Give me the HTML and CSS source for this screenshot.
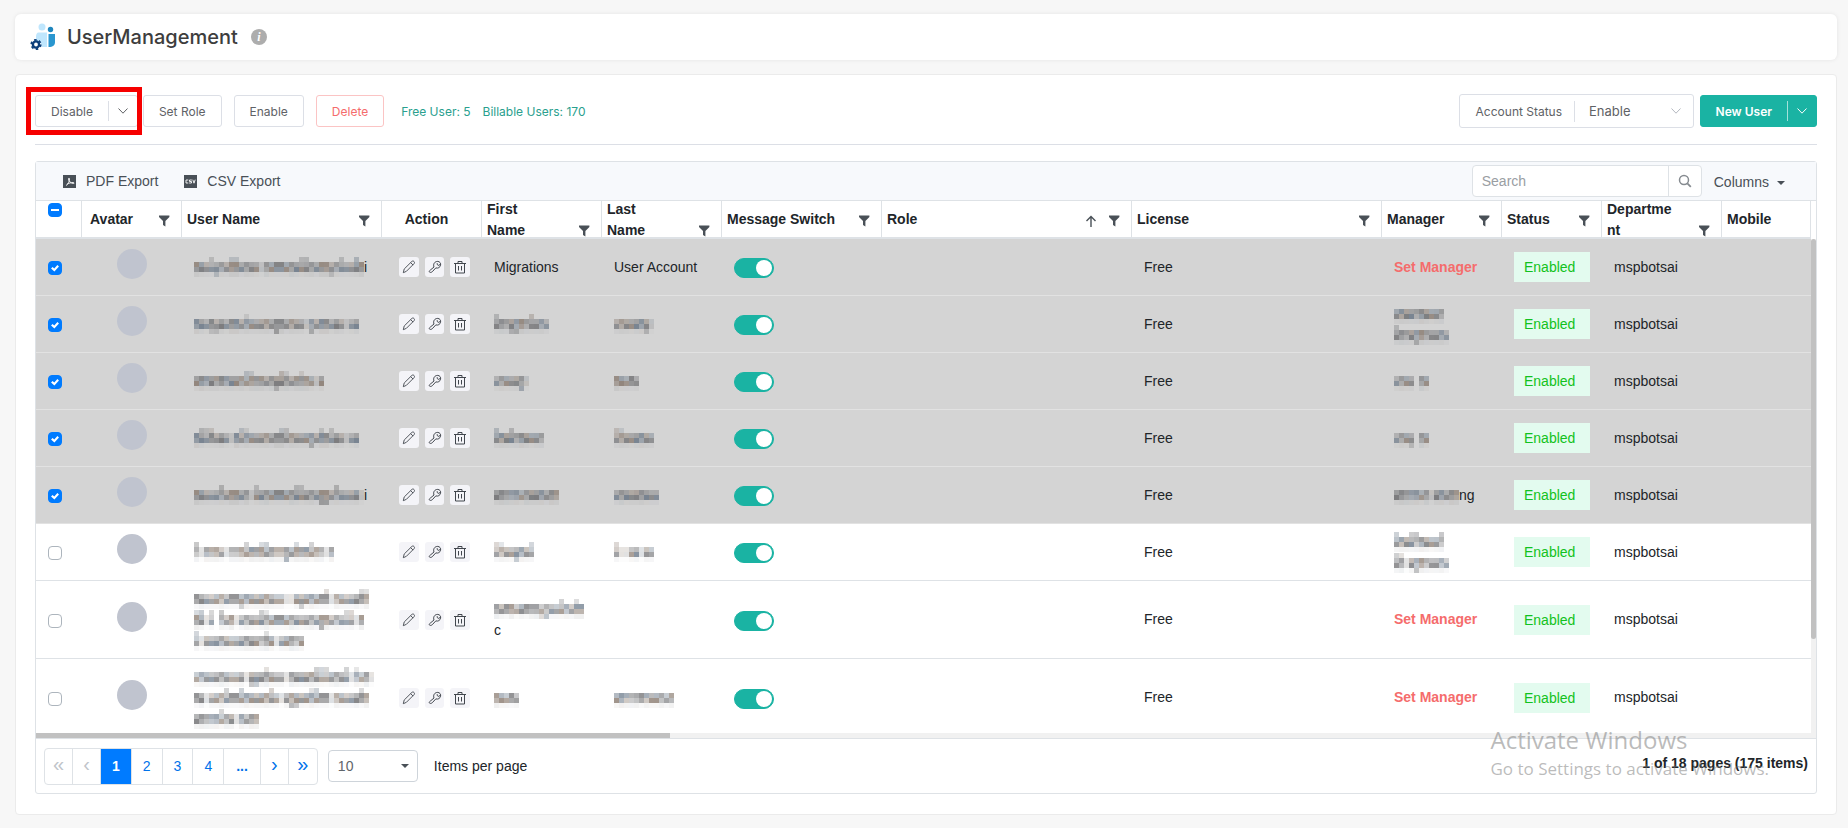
FILE: index.html
```html
<!DOCTYPE html>
<html lang="en">
<head>
    <meta charset="utf-8">
    <title>UserManagement</title>
    <meta name="viewport" content="width=device-width, initial-scale=1">
    <link rel="stylesheet" href="styles.css">
</head>

<body>
    <!-- shared icons -->
    <svg class="sprite" aria-hidden="true">
        <symbol id="i-filter" viewBox="0 0 12 12"><path d="M1 0.5h10.4v1.4L7.4 6v5.6L5 10V6L1 1.9z" fill="currentColor"/></symbol>
        <symbol id="i-down" viewBox="0 0 12 12"><path d="M1.5 3.5L6 8.2l4.500-4.700" fill="none" stroke="currentColor"/></symbol>
        <symbol id="i-pencil" viewBox="0 0 14 14"><path d="M1.300 12.700l.9-3.700 7.700-7.600c.7-.6 1.500-.5 2.100.1s.7 1.400.1 2.100l-7.700 7.700zM8.700 2.700l2.400 2.400" fill="none" stroke="currentColor" stroke-width=".9"/></symbol>
        <symbol id="i-key" viewBox="0 0 14 14"><path d="M6 7C4.800 4 6.800 1.300 9.800 1.400c2 .2 3.200 1.800 2.800 3.800-.5 2.200-2.600 3.400-4.800 2.700l-3.500 3.800c-1.100 1-2.800.9-3 .1-.2-.9.700-1.600 1.600-2.200zM9.200 3.200c-.3 1.300.4 2.200 1.700 2.200l1.400-1.300" fill="none" stroke="currentColor"/></symbol>
        <symbol id="i-trash" viewBox="0 0 14 14"><path d="M1 3.500h12M5 3.500v-2h4v2M2.500 3.500v9.500h9v-9.500M5.500 6v4.500M8.500 6v4.500" fill="none" stroke="currentColor"/></symbol>
    </svg>

    <header class="page-head">
        <svg class="logo" viewBox="0 0 26 30">
            <circle cx="12" cy="5" r="3.500" fill="#bfe6fd"/>
            <path d="M8.500 10.500H17V25h-5.500c0-4-2-6-5.500-6v-4c0-3 1-4.500 2.500-4.500z" fill="#bfe6fd"/>
            <circle cx="20.500" cy="7.500" r="2.700" fill="#1f86bd"/>
            <path d="M18.500 12h6.500v8c0 3.500-2 5-6.500 5z" fill="#2a96cf"/>
            <circle cx="6" cy="22.500" r="3.100" fill="#fff" stroke="#0d3f7a" stroke-width="2.400"/>
            <circle cx="6" cy="22.500" r="4.700" fill="none" stroke="#0d3f7a" stroke-width="1.800" stroke-dasharray="2.500 2.420"/>
        </svg>
        <h1>UserManagement</h1>
        <span class="info">i</span>
    </header>

    <main class="card">
        <div class="actions">
            <div class="split split-marked">
                <button type="button">Disable</button>
                <button type="button" class="arrow" aria-label="More disable options"><svg><use href="#i-down"/></svg></button>
            </div>
            <button type="button" class="btn">Set Role</button>
            <button type="button" class="btn">Enable</button>
            <button type="button" class="btn btn-danger">Delete</button>
            <span class="count">Free User: 5</span>
            <span class="count">Billable Users: 170</span>

            <div class="status-filter">
                <label for="status">Account Status</label>
                <select id="status"><option>Enable</option><option>Disable</option></select>
                <svg><use href="#i-down"/></svg>
            </div>
            <div class="split split-primary">
                <button type="button">New User</button>
                <button type="button" class="arrow" aria-label="More user options"><svg><use href="#i-down"/></svg></button>
            </div>
        </div>

        <section class="grid">
            <div class="grid-tools">
                <button type="button" class="tool">
                    <svg viewBox="0 0 13 13"><path d="M0 0h13v13H0z" fill="#495057"/><path d="M3 10.500c2-1 3.500-4 3.500-6.500 0-1.200-1-1.200-1 0 0 2 2.500 4.500 5 4.500 1 0 .8-1-.5-1-2 0-4.500.8-6 1.800" fill="none" stroke="#fff" stroke-width=".9"/></svg>
                    PDF Export
                </button>
                <button type="button" class="tool">
                    <svg viewBox="0 0 13 13"><path d="M0 0h13v13H0z" fill="#495057"/><path d="M4.300 5H2v3h2.300M7.800 5H5.500v1.500h2V8H5.200M8.800 4.700L10 8.200l1.200-3.500" fill="none" stroke="#fff" stroke-width=".9"/></svg>
                    CSV Export
                </button>
                <div class="search">
                    <input type="text" placeholder="Search" aria-label="Search">
                    <button type="button" aria-label="Run search"><svg viewBox="0 0 14 14"><circle cx="6" cy="6" r="4.500" fill="none" stroke="currentColor" stroke-width="1.500"/><path d="M9.300 9.300l3.500 3.500" stroke="currentColor" stroke-width="1.800"/></svg></button>
                </div>
                <button type="button" class="columns">Columns <i class="caret"></i></button>
            </div>

            <div class="grid-body">
                <div class="grid-view">
                    <table>
                        <colgroup>
                            <col class="w-check"><col class="w-s"><col class="w-name"><col class="w-s"><col class="w-m"><col class="w-m"><col class="w-switch">
                            <col class="w-l"><col class="w-l"><col class="w-m"><col class="w-s"><col class="w-m"><col>
                        </colgroup>
                        <thead><tr id="head"></tr></thead>
                        <tbody id="rows"></tbody>
                    </table>
                </div>
                <div class="vbar"><i></i></div>
            </div>
            <div class="hbar"><i></i></div>

            <footer class="pager">
                <nav class="pages">
                    <button type="button" class="sign" disabled>«</button>
                    <button type="button" class="sign" disabled>‹</button>
                    <button type="button" class="current">1</button>
                    <button type="button">2</button>
                    <button type="button">3</button>
                    <button type="button">4</button>
                    <button type="button" class="dots">...</button>
                    <button type="button" class="sign">›</button>
                    <button type="button" class="sign">»</button>
                </nav>
                <div class="size">
                    <select id="size"><option>10</option><option>25</option><option>50</option></select>
                    <i class="caret"></i>
                </div>
                <label for="size">Items per page</label>
                <strong>1 of 18 pages (175 items)</strong>
            </footer>
        </section>
    </main>

    <div class="activate">
        <p>Activate Windows</p>
        <small>Go to Settings to activate Windows.</small>
    </div>

    <script src="script.js"></script>
</body>
</html>
```

FILE: styles.css
```css
* {
    box-sizing: border-box;
}

body {
    margin: 0;
    padding: 14px 11px 14px 15px;
    background: #f7f7f7;
    color: #212529;
    font-family: "Liberation Sans", Arial, sans-serif;
    font-size: 14px;
    line-height: 21px;
}

button, input, select {
    font: inherit;
    color: inherit;
    margin: 0;
    padding: 0;
    border: none;
    background: none;
}

button {
    cursor: pointer;
}

select {
    appearance: none;
}

svg {
    display: block;
    width: 12px;
    height: 12px;
}

.sprite {
    position: absolute;
    width: 0;
    height: 0;
}

/* Page header */
.page-head {
    display: flex;
    align-items: center;
    height: 46px;
    padding: 0 15px;
    background: #fff;
    border-radius: 6px;
    box-shadow: 0 0 4px rgba(0, 0, 0, 0.08);
    font-family: Inter, sans-serif;
}

.logo {
    width: 26px;
    height: 30px;
}

.page-head h1 {
    margin: 0 13px 0 11px;
    color: #3d3d3d;
    font-size: 20px;
    font-weight: 500;
}

.info {
    width: 16px;
    height: 16px;
    border-radius: 50%;
    background: #adadad;
    color: #fff;
    font: italic bold 12px/16px "Liberation Serif", serif;
    text-align: center;
}

/* Card and its action bar */
.card {
    margin-top: 14px;
    padding: 19px 19px 20px;
    background: #fff;
    border: 1px solid #ebebeb;
    border-radius: 4px;
}

.actions {
    display: flex;
    align-items: center;
    height: 51px;
    padding-bottom: 16px;
    border-bottom: 1px solid #dcdfe6;
    color: #606266;
    font-family: Inter, sans-serif;
    font-size: 12px;
}

.btn, .split {
    height: 32px;
    border: 1px solid #dcdfe6;
    border-radius: 3px;
    background: #fff;
}

.btn {
    margin-right: 12px;
    padding: 0 15px;
}

.btn-danger {
    margin-right: 17px;
    border-color: #fbc4c4;
    color: #f56c6c;
}

.split {
    display: flex;
    align-items: center;
}

.split button {
    padding: 0 15px;
}

.split .arrow {
    height: 20px;
    padding: 0 8px;
    border-left: 1px solid #dcdfe6;
}

.split-marked {
    position: relative;
    margin-right: 5px;
}

/* Red frame round the Disable button */
.split-marked::after {
    content: '';
    position: absolute;
    inset: -9px -5px -9px -10px;
    border: 5px solid #f60000;
    pointer-events: none;
}

.split-primary {
    border-color: #1ab3a3;
    background: #1ab3a3;
    color: #fff;
    font-weight: 600;
}

.split-primary .arrow {
    border-color: #a3e1da;
}

.count {
    margin-right: 12px;
    color: #2aa08e;
}

.status-filter {
    display: flex;
    align-items: center;
    width: 235px;
    height: 34px;
    margin-left: auto;
    margin-right: 6px;
    padding: 0 11px 0 16px;
    border: 1px solid #dcdfe6;
    border-radius: 3px;
}

.status-filter label {
    padding-right: 12px;
    border-right: 1px solid #dcdfe6;
}

.status-filter select {
    flex: 1;
    padding-left: 14px;
    font-size: 13px;
}

.status-filter svg {
    color: #b4b8c0;
}

/* Grid */
.grid {
    margin-top: 16px;
    border: 1px solid #dee2e6;
    border-radius: 3px;
}

.grid-tools {
    display: flex;
    align-items: center;
    height: 39px;
    padding: 0 31px 0 27px;
    border-bottom: 1px solid #dee2e6;
    background: #f7f9fc;
    color: #495057;
}

.tool {
    display: flex;
    align-items: center;
    gap: 10px;
    margin-right: 26px;
}

.tool svg {
    width: 13px;
    height: 13px;
}

.search {
    display: flex;
    width: 230px;
    height: 32px;
    margin-left: auto;
    margin-right: 12px;
    border: 1px solid #dee2e6;
    border-radius: 4px;
    background: #fff;
}

.search input {
    flex: 1;
    min-width: 0;
    padding: 0 9px;
}

.search input::placeholder {
    color: #9a9ea3;
}

.search button {
    padding: 0 9px;
    border-left: 1px solid #dee2e6;
    color: #868b90;
}

.search svg {
    width: 14px;
    height: 14px;
}

.columns {
    display: flex;
    align-items: center;
    gap: 8px;
    padding-top: 3px;
}

.caret {
    border: 4px solid transparent;
    border-top-color: #495057;
    border-bottom: 0;
}

.grid-body {
    display: flex;
}

.grid-view {
    flex: 1;
    min-width: 0;
    height: 532px;
    overflow: hidden;
}

table {
    width: 100%;
    table-layout: fixed;
    border-spacing: 0;
}

.w-check { width: 46px; }
.w-s { width: 100px; }
.w-m { width: 120px; }
.w-name { width: 200px; }
.w-switch { width: 160px; }
.w-l { width: 250px; }

th {
    padding: 0;
    border-right: 1px solid #dee2e6;
    border-bottom: 2px solid #dee2e6;
    font-weight: bold;
    text-align: left;
}

.th {
    display: flex;
    align-items: center;
    gap: 11px;
    height: 36px;
    padding: 0 11px 0 5px;
    overflow: hidden;
}

.th span {
    flex: 1;
    min-width: 0;
    overflow-wrap: anywhere;
}

.th svg {
    flex: none;
    margin-top: 3px;
    color: #495057;
}

/* Long names break in two lines, the icon follows the last one */
.th-two {
    align-items: flex-end;
}

.th-two span {
    margin-bottom: -4px;
    padding-right: 12px;
}

.th-avatar {
    padding-left: 8px;
}

.th-center {
    justify-content: center;
    padding-right: 15px;
}

.th-center span {
    flex: none;
}

.th-check {
    align-items: flex-start;
    padding: 2px 0 0 12px;
}

td {
    height: 57px;
    padding: 0 12px;
    border-bottom: 1px solid #dee2e6;
    vertical-align: middle;
}

.tall td {
    height: 78px;
}

.selected td {
    background: #d4d4d4;
    border-color: #e2e2e2;
}

input[type="checkbox"] {
    display: block;
    appearance: none;
    width: 14px;
    height: 14px;
    border: 1px solid #adb5bd;
    border-radius: 4px;
    background: #fff;
}

td input[type="checkbox"] {
    margin-top: 2px;
}

input[type="checkbox"]:checked, .partial:not(:checked) {
    border-color: #007bff;
    background: #007bff;
}

input[type="checkbox"]:checked::before {
    content: '';
    display: block;
    width: 12px;
    height: 12px;
    background: #fff;
    clip-path: polygon(17% 54%, 30% 42%, 44% 54%, 70% 25%, 83% 37%, 45% 80%);
}

.partial::before {
    content: '';
    display: block;
    width: 8px;
    height: 2px;
    margin: 5px 2px;
    background: #fff;
}

.avatar {
    width: 30px;
    height: 30px;
    margin: 0 auto 6px;
    border-radius: 50%;
    background: #c0c4cf;
}

.row-tools {
    display: flex;
    gap: 6px;
    margin-left: 5px;
}

.row-tools button {
    display: grid;
    place-items: center;
    width: 20px;
    height: 20px;
    border-radius: 3px;
    background: #f4f4f8;
    color: #41464d;
}

.row-tools svg {
    width: 14px;
    height: 14px;
}

input.switch {
    width: 40px;
    height: 20px;
    border-radius: 10px;
}

input.switch:checked {
    border-color: #1ab3a3;
    background: #1ab3a3;
}

input.switch:checked::before {
    width: 16px;
    height: 16px;
    margin: 1px 1px 1px auto;
    border-radius: 50%;
    clip-path: none;
}

.set-manager {
    color: #f56c6c;
    font-weight: bold;
    text-decoration: none;
}

.badge {
    display: block;
    width: 76px;
    padding: 5px 10px 4px;
    background: #e3fbef;
    color: #12c220;
}

.line {
    display: flex;
    align-items: center;
    height: 21px;
}

.mask {
    flex: none;
    height: 20px;
}

/* Scroll bars */
.vbar {
    width: 5px;
    margin-top: 38px;
    background: #f1f1f1;
}

.vbar i {
    display: block;
    height: 400px;
    border-radius: 3px;
    background: #c1c1c1;
}

.hbar {
    height: 5px;
    background: #f1f1f1;
}

.hbar i {
    display: block;
    width: 35.6%;
    height: 5px;
    background: #c1c1c1;
}

/* Pager */
.pager {
    display: flex;
    align-items: center;
    height: 55px;
    padding: 0 8px;
    border-top: 1px solid #dee2e6;
}

.pages {
    display: flex;
    height: 37px;
    margin-right: 10px;
    border: 1px solid #dee2e6;
    border-radius: 4px;
    overflow: hidden;
    color: #0072ea;
}

.pages button {
    padding: 0 11px;
    border-right: 1px solid #dee2e6;
}

.pages button:last-child {
    border-right: none;
}

.pages .sign {
    width: 28px;
    padding: 0 0 4px;
    font-size: 20px;
}

.pages .sign:disabled {
    color: #c0c4ca;
}

.pages .current {
    background: #007bff;
    color: #fff;
    font-weight: bold;
}

.pages .dots {
    padding: 0 12px;
    font-weight: bold;
}

.size {
    display: flex;
    align-items: center;
    width: 90px;
    height: 32px;
    margin-right: 16px;
    padding: 0 8px 0 9px;
    border: 1px solid #ced4da;
    border-radius: 4px;
    color: #5f656b;
}

.size select {
    flex: 1;
}

.pager strong {
    margin-left: auto;
    margin-bottom: 6px;
}

/* System notice over the page */
.activate {
    position: absolute;
    right: 79px;
    top: 723px;
    color: rgba(120, 120, 120, 0.5);
    font-family: "Open Sans", sans-serif;
    pointer-events: none;
}

.activate p {
    margin: 0;
    font-size: 24px;
    line-height: 34px;
}

.activate small {
    display: block;
    font-size: 17px;
    line-height: 24px;
}
```

FILE: script.js
```js
const icon = (name) => `<svg><use href="#i-${name}"/></svg>`;

const columns = [
    { name: "Avatar", cls: "th-avatar", filter: true },
    { name: "User Name", filter: true },
    { name: "Action", cls: "th-center" },
    { name: "First Name", cls: "th-two", filter: true },
    { name: "Last Name", cls: "th-two", filter: true },
    { name: "Message Switch", filter: true },
    { name: "Role", sort: true, filter: true },
    { name: "License", filter: true },
    { name: "Manager", filter: true },
    { name: "Status", filter: true },
    { name: "Department", cls: "th-two", filter: true },
    { name: "Mobile" }
];

// A string starting with # is a masked value, one letter per block:
// x body, l with ascender, g with descender, . faint, space for a gap.
// Text after a second # stays readable on the same line.
const users = [
    { on: true, user: ["#xxxlgxxllxxxx.xxxxxxxllxxxxgxlxxlx#i"], first: ["Migrations"], last: ["User Account"] },
    { on: true, user: ["#xxxggxxxxxlxxxxxgxxxxx.gxxxxxx.xx"], first: ["#lxxggxxlxxx"], last: ["#xxxxxxg."], manager: ["#xxxxxxxxxx", "#lxxxgxxxxxx"] },
    { on: true, user: ["#xxxxxxxxxxllxxxxgllxxlxx.x"], first: ["#xxxxxg."], last: ["#xxxxx"], manager: ["#xxxx xx"] },
    { on: true, user: ["#xlllxxx.xllxxxxxxllxxxxgxlxlxx.xx"], first: ["#lxxlxxxxxx"], last: ["#llxxxxxx"], manager: ["#xxxg xx"] },
    { on: true, user: ["#xxxxxlxxxxx.lxxxxxxxllxxxggxlxxxx.#i"], first: ["#xxxxxxxxxxxxx"], last: ["#xxxxxxxxx"], manager: ["#xxxxxxx.xxxxx#ng"] },
    { user: ["#l.xxxx.xxxlxxllxxxgxlxxlxx.x"], first: ["#llxxgxxl"], last: ["#l..xx.xx"], manager: ["#lxxllxxxxl", "#ll.xgxxxxxx"] },
    { tall: true, user: ["#xxxxxxxxxgxxxxxxxx..xgxxxxl.xxxxxll", "#ll.l lxx.xxxxllxxxxxxxxxxgxxxxll.x", "#l.xxxxxxxxxxxxlx.xxxxx"], first: ["#xxxxxxxxxggxxlxxlx", "c"] },
    { tall: true, user: ["#xxxxxxxxxx.ggxlxxx.xxxxxlllxxxl.lxx.", "#xx.xxxlxxlxxxxxlx.xggxxllxx.xxxxxlx", "#xxxxxlxx.xxxx"], first: ["#xxxxx"], last: ["#xxxxxxxxxxxx"] }
];

// Blocks are 5px, four rows high
function mask(text) {
    const tints = ["86,86,88", "70,88,108", "112,94,80", "86,88,92"];
    let rects = "";
    [...text].forEach((c, x) => {
        if (c === " ") {
            return;
        }
        const shades = [c === "l" ? 0.28 : 0, 0.55, 0.6, c === "g" ? 0.4 : 0.08];
        shades.forEach((shade, y) => {
            const mix = (x * 37 + y * 53 + x * x * 11 + text.length * 7) % 100;
            const tint = tints[(mix >> 2) % 4];
            const alpha = shade * (c === "." ? 0.3 : 0.5 + mix / 150);
            rects += `<rect x="${x * 5}" y="${y * 5}" width="5" height="5" fill="rgba(${tint},${alpha.toFixed(2)})"/>`;
        });
    });
    return `<svg class="mask" style="width:${text.length * 5}px" shape-rendering="crispEdges">${rects}</svg>`;
}

function value(lines = []) {
    return lines.map((line) => {
        if (line[0] !== "#") {
            return `<div class="line">${line}</div>`;
        }
        const [, hidden, tail = ""] = line.split("#");
        return `<div class="line">${mask(hidden)}${tail}</div>`;
    }).join("");
}

function headCell(column) {
    return `<th><div class="th ${column.cls || ""}"><span>${column.name}</span>` +
        `${column.sort ? '<svg viewBox="0 0 12 12"><path d="M6 12V1.500M1.500 6L6 1.500 10.500 6" fill="none" stroke="currentColor" stroke-width="1.400"/></svg>' : ""}` +
        `${column.filter ? icon("filter") : ""}</div></th>`;
}

function userRow(user, index) {
    const n = index + 1;
    const cls = [user.on ? "selected" : "", user.tall ? "tall" : ""].join(" ").trim();
    return `<tr class="${cls}">
        <td><input type="checkbox" aria-label="Select row ${n}" ${user.on ? "checked" : ""}></td>
        <td><div class="avatar"></div></td>
        <td>${value(user.user)}</td>
        <td><div class="row-tools">
            <button type="button" aria-label="Edit">${icon("pencil")}</button>
            <button type="button" aria-label="Reset password">${icon("key")}</button>
            <button type="button" aria-label="Delete">${icon("trash")}</button>
        </div></td>
        <td>${value(user.first)}</td>
        <td>${value(user.last)}</td>
        <td><input type="checkbox" class="switch" aria-label="Message switch ${n}" checked></td>
        <td></td>
        <td>Free</td>
        <td>${user.manager ? value(user.manager) : '<a href="#" class="set-manager">Set Manager</a>'}</td>
        <td><span class="badge">Enabled</span></td>
        <td>mspbotsai</td>
        <td></td>
    </tr>`;
}

document.querySelector("#head").innerHTML =
    '<th><div class="th th-check"><input type="checkbox" class="partial" aria-label="Select all"></div></th>' +
    columns.map(headCell).join("");
document.querySelector("#rows").innerHTML = users.map(userRow).join("");
```
